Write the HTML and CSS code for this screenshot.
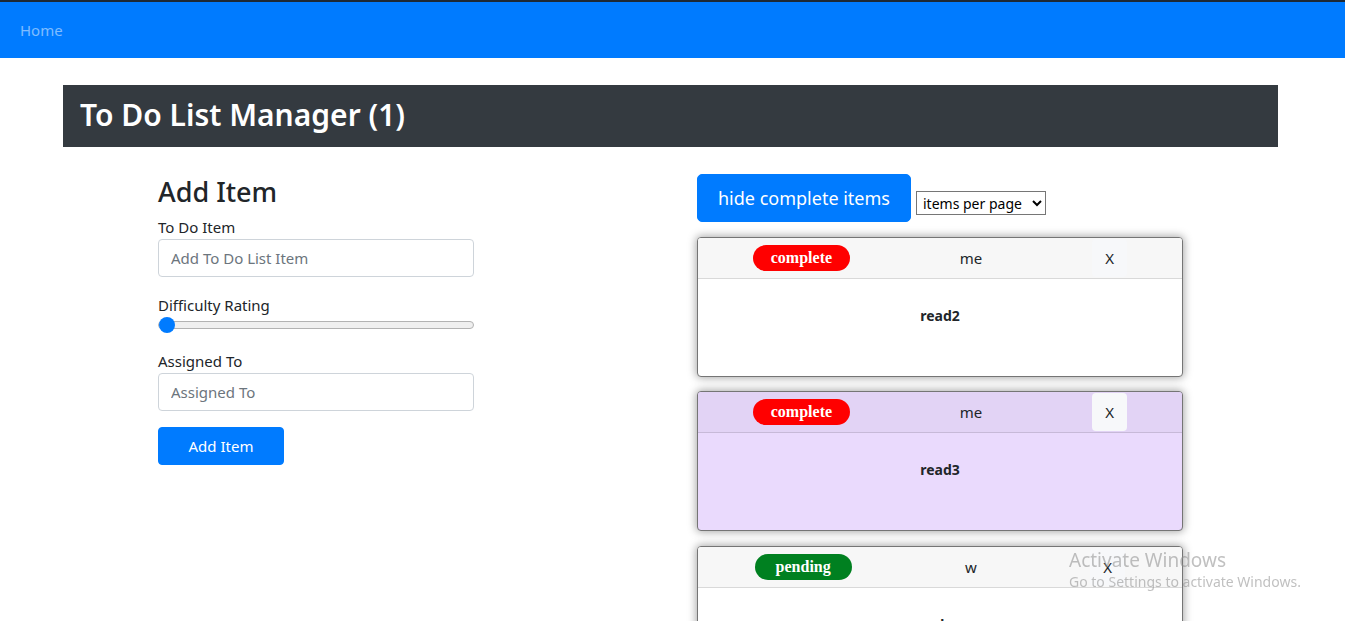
FILE: index.html
```html
<!DOCTYPE html>
<html lang="en">
<head>
<meta charset="utf-8">
<title>To Do List Manager</title>
<link rel="stylesheet" href="styles.css">
</head>
<body>
<nav class="navbar">
  <a class="nav-link" href="#">Home</a>
</nav>
<main class="container">
  <header class="title-bar">
    <h1>To Do List Manager (1)</h1>
  </header>
  <div class="row">
    <section class="form-col">
      <h2>Add Item</h2>
      <form class="add-form">
        <div class="field">
          <label for="item">To Do Item</label>
          <input id="item" class="text-input" type="text" placeholder="Add To Do List Item">
        </div>
        <div class="field">
          <label for="difficulty">Difficulty Rating</label>
          <input id="difficulty" class="range" type="range" min="1" max="5" value="1">
        </div>
        <div class="field">
          <label for="assignee">Assigned To</label>
          <input id="assignee" class="text-input" type="text" placeholder="Assigned To">
        </div>
        <button type="button" class="btn btn-primary">Add Item</button>
      </form>
    </section>
    <section class="list-col">
      <div class="toolbar">
        <button type="button" class="btn btn-primary btn-lg">hide complete items</button>
        <select class="per-page">
          <option>items per page</option>
        </select>
      </div>
      <div class="cards">
        <article class="card">
          <div class="card-header">
            <span class="badge badge-complete">complete</span>
            <span class="assignee">me</span>
            <button type="button" class="btn-close">X</button>
          </div>
          <div class="card-body">read2</div>
        </article>
        <article class="card card-hover">
          <div class="card-header">
            <span class="badge badge-complete">complete</span>
            <span class="assignee">me</span>
            <button type="button" class="btn-close">X</button>
          </div>
          <div class="card-body">read3</div>
        </article>
        <article class="card card-last">
          <div class="card-header">
            <span class="badge badge-pending">pending</span>
            <span class="assignee">w</span>
            <button type="button" class="btn-close">X</button>
          </div>
          <div class="card-body">d</div>
        </article>
      </div>
    </section>
  </div>
</main>
<div class="watermark">
  <div class="wm-title">Activate Windows</div>
  <div class="wm-sub">Go to Settings to activate Windows.</div>
</div>
</body>
</html>
```

FILE: styles.css
```css
* { box-sizing: border-box; }

html, body { height: 100%; overflow: hidden; }

body {
  margin: 0;
  font-family: "Noto Sans", "Open Sans", sans-serif;
  font-size: 16px;
  line-height: 1.5;
  color: #212529;
  background: #fff;
}

.navbar {
  height: 58px;
  background: #007bff;
  border-top: 2px solid #1d2935;
  display: flex;
  align-items: center;
  padding-left: 20px;
}

.nav-link {
  color: rgba(255, 255, 255, 0.5);
  text-decoration: none;
  font-size: 15px;
}

.container {
  margin-left: 63px;
  width: 1215px;
  padding-top: 27px;
}

.title-bar {
  background: #343a40;
  height: 62px;
  display: flex;
  align-items: center;
  padding-left: 17px;
  padding-bottom: 3px;
}

.title-bar h1 {
  margin: 0;
  color: #fff;
  font-size: 30px;
  font-weight: 600;
  line-height: 1.2;
}

.row {
  display: grid;
  grid-template-columns: 634px 1fr;
  margin-top: 27px;
}

.form-col {
  padding-left: 95px;
  padding-top: 2px;
  width: 411px;
}

.form-col h2 {
  margin: 0 0 7px;
  font-size: 27px;
  font-weight: 500;
  line-height: 1.2;
}

.field { margin-bottom: 16px; }

.field label {
  display: block;
  font-size: 15px;
  line-height: 24px;
}

.text-input {
  display: block;
  width: 316px;
  height: 38px;
  padding: 6px 12px;
  border: 1px solid #ced4da;
  border-radius: 4px;
  font-family: inherit;
  font-size: 15px;
  color: #495057;
}

.text-input::placeholder { color: #6c757d; }

.range {
  -webkit-appearance: none;
  appearance: none;
  display: block;
  width: 316px;
  height: 16px;
  margin: 0;
  background: transparent;
}

.range::-webkit-slider-runnable-track {
  height: 8px;
  background: #efefef;
  border: 1px solid #b2b2b2;
  border-radius: 4px;
}

.range::-webkit-slider-thumb {
  -webkit-appearance: none;
  width: 16px;
  height: 16px;
  margin-top: -5px;
  border-radius: 50%;
  background: #007bff;
  border: none;
}

.btn {
  font-family: inherit;
  border: 1px solid transparent;
  border-radius: 4px;
  cursor: pointer;
  white-space: nowrap;
}

.btn-primary {
  background: #007bff;
  border-color: #007bff;
  color: #fff;
  font-size: 15px;
  line-height: 24px;
  height: 38px;
  width: 126px;
  padding: 6px 0;
}

.btn-lg {
  font-size: 18px;
  height: 48px;
  width: 214px;
  padding: 0;
  border-radius: 5px;
}

.toolbar {
  display: flex;
  align-items: flex-end;
  gap: 5px;
}

.per-page {
  width: 130px;
  height: 24px;
  margin-bottom: 7px;
  font-family: inherit;
  font-size: 14px;
  border: 1px solid #767676;
  border-radius: 0;
  background: #fff;
  color: #000;
  padding: 0 2px;
}

.cards {
  display: flex;
  flex-direction: column;
  gap: 14px;
  margin-top: 15px;
  width: 486px;
}

.card {
  border: 1px solid #757575;
  border-radius: 4px;
  overflow: hidden;
  background: #fff;
  box-shadow: 0 0 8px 1px rgba(0, 0, 0, 0.35);
  height: 140px;
  flex-shrink: 0;
}

.card-last { margin-top: 1px; }

.card-header {
  height: 41px;
  background: #f7f7f7;
  border-bottom: 1px solid #d9d9d9;
  display: flex;
  align-items: center;
  justify-content: space-around;
}

.badge {
  display: inline-block;
  width: 97px;
  height: 26px;
  border-radius: 13px;
  color: #fff;
  text-align: center;
  font-family: "Liberation Serif", serif;
  font-weight: 700;
  font-size: 16px;
  line-height: 25px;
}

.badge-complete { background: #ff0000; }
.badge-pending { background: #008020; }

.assignee {
  font-size: 15px;
  color: #212529;
}

.btn-close {
  width: 35px;
  height: 38px;
  border: 1px solid transparent;
  border-radius: 4px;
  background: #f7f8fa;
  color: #212529;
  font-family: inherit;
  font-size: 15px;
  padding: 0;
  cursor: pointer;
}

.card-body {
  padding-top: 25px;
  text-align: center;
  font-weight: 700;
  font-size: 14px;
  line-height: 24px;
}

.card-hover { background: #eadafd; }
.card-hover .card-header {
  background: #e2d3f5;
  border-bottom-color: #c7b9d8;
}

.watermark {
  position: fixed;
  left: 1069px;
  top: 548px;
  color: rgba(140, 140, 140, 0.55);
  pointer-events: none;
  line-height: 1.3;
}

.wm-title { font-size: 19px; }
.wm-sub { font-size: 14px; }
```
